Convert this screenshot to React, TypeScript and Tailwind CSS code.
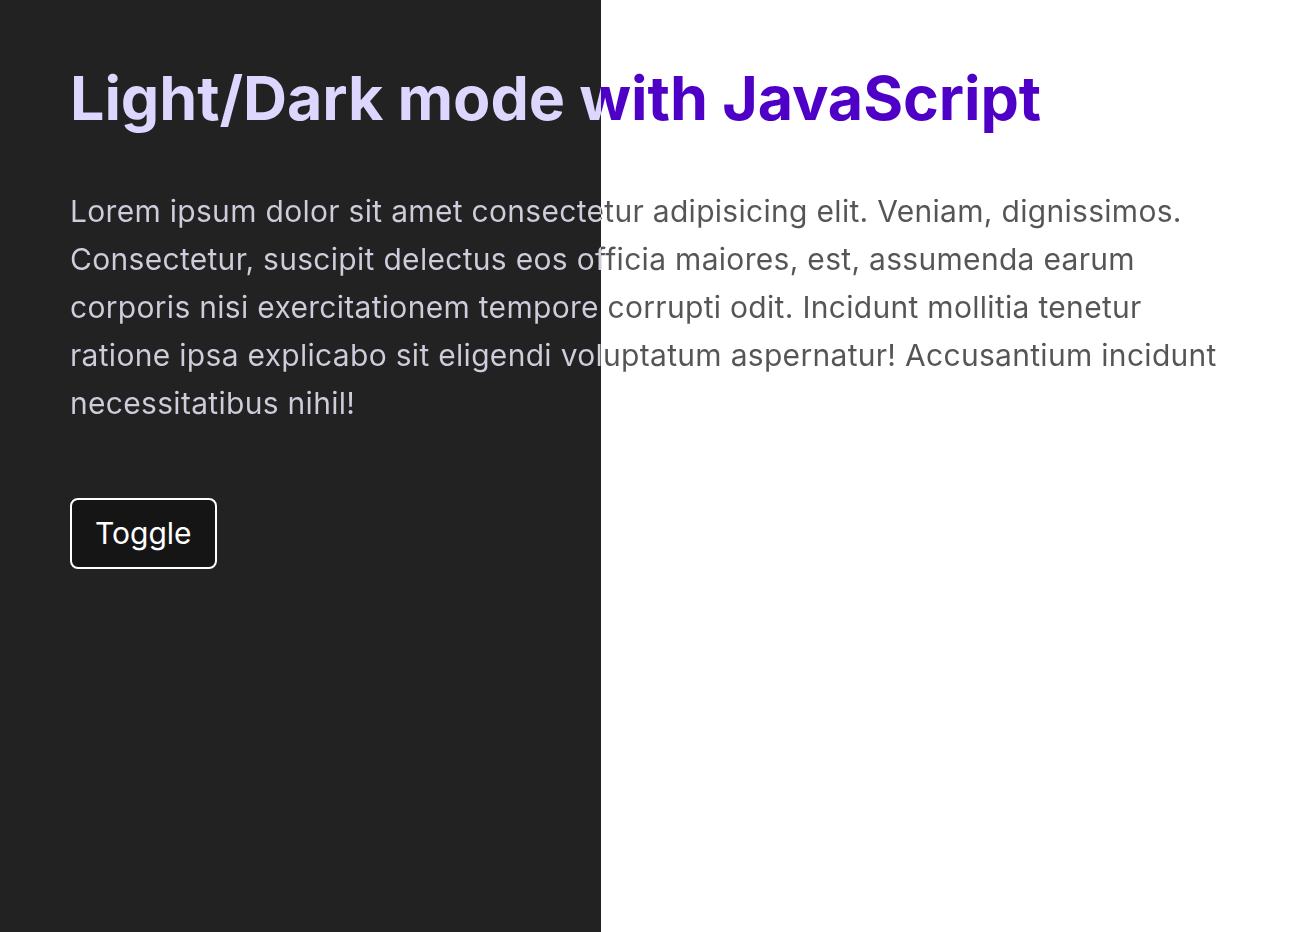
export default function App() {
  return (
    <div className="min-h-screen bg-[linear-gradient(to_right,#222222_601px,#ffffff_601px)] font-['Inter',sans-serif]">
      <div className="px-[70px] pt-[62px]">
        <h1 className="text-[61px] font-bold leading-[1.2] tracking-[-0.1px] bg-[linear-gradient(to_right,#ddd6fe_531px,#4f00c7_531px)] bg-clip-text text-transparent w-fit">
          Light/Dark mode with JavaScript
        </h1>
        <p className="mt-[52px] text-[30px] leading-[48px] tracking-[0.3px] bg-[linear-gradient(to_right,#d0ccdc_531px,#555555_531px)] bg-clip-text text-transparent">
          Lorem ipsum dolor sit amet consectetur adipisicing elit. Veniam, dignissimos. Consectetur, suscipit delectus eos officia maiores, est, assumenda earum corporis nisi exercitationem tempore corrupti odit. Incidunt mollitia tenetur ratione ipsa explicabo sit eligendi voluptatum aspernatur! Accusantium incidunt necessitatibus nihil!
        </p>
        <button className="mt-[71px] h-[71px] px-[23px] rounded-[8px] border-2 border-white bg-[#151515] text-white text-[30px]">
          Toggle
        </button>
      </div>
    </div>
  )
}
